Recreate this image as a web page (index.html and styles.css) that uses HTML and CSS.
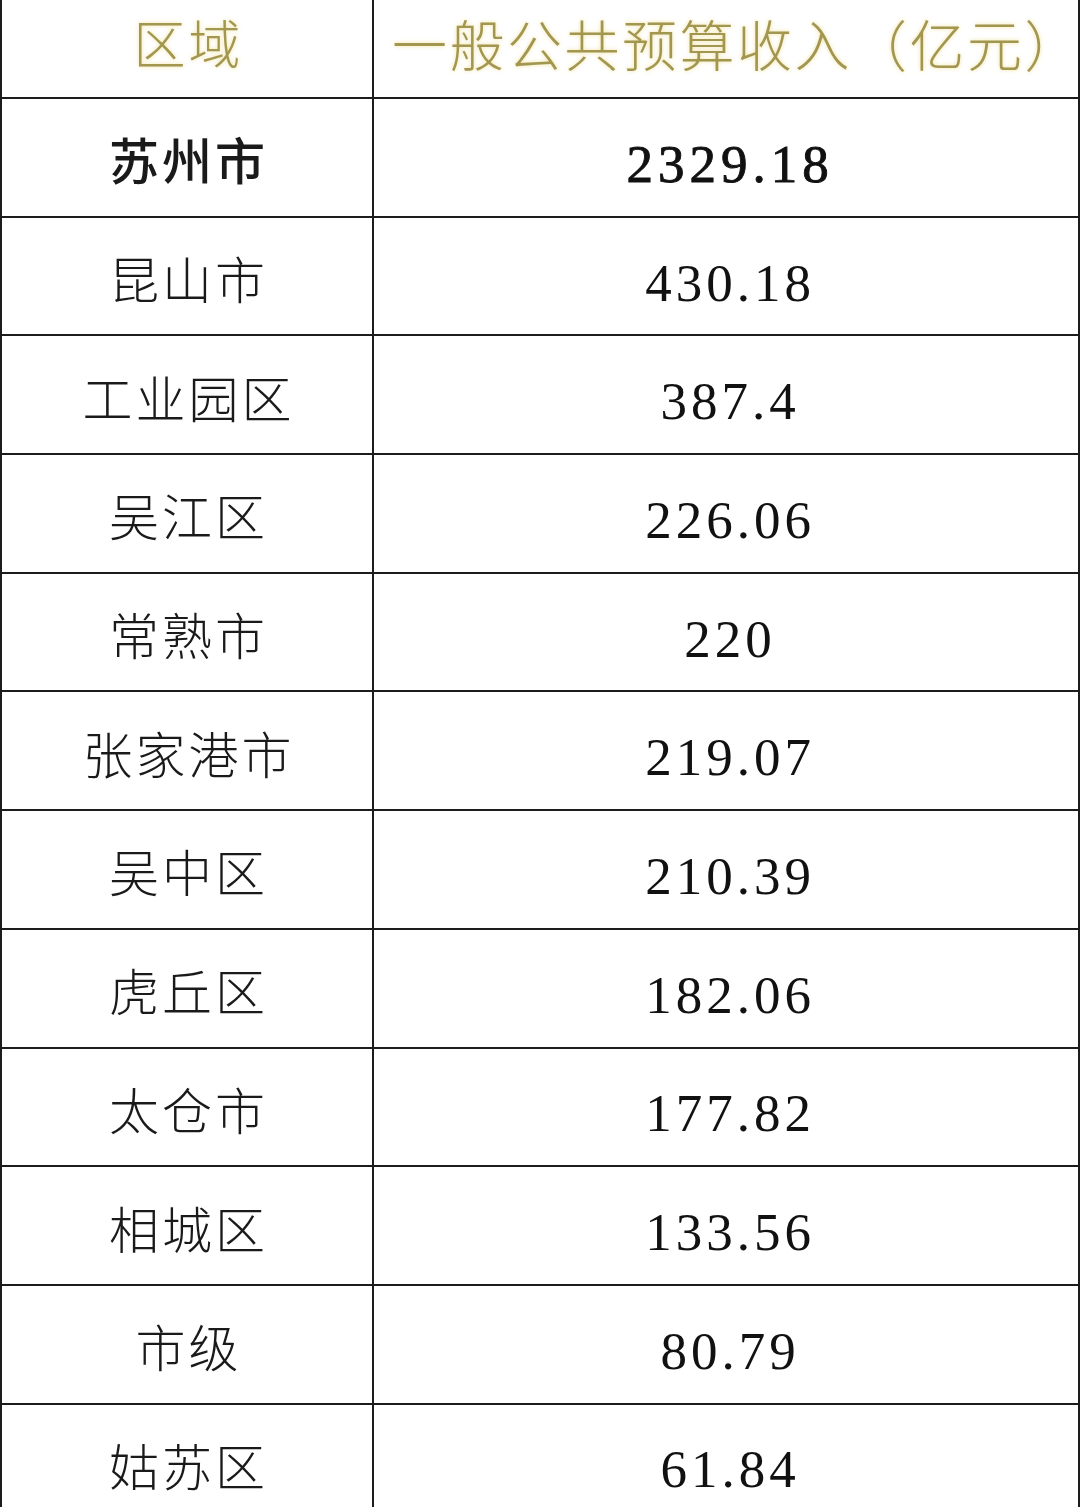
FILE: index.html
```html
<!DOCTYPE html>
<html lang="zh-CN">
<head>
<meta charset="utf-8">
<title>苏州一般公共预算收入</title>
<link rel="stylesheet" href="styles.css">
</head>
<body>
<div class="table">
  <div class="cell head name">区域</div>
  <div class="cell head value">一般公共预算收入（亿元）</div>

  <div class="cell name bold">苏州市</div>
  <div class="cell value bold">2329.18</div>

  <div class="cell name">昆山市</div>
  <div class="cell value">430.18</div>

  <div class="cell name">工业园区</div>
  <div class="cell value">387.4</div>

  <div class="cell name">吴江区</div>
  <div class="cell value">226.06</div>

  <div class="cell name">常熟市</div>
  <div class="cell value">220</div>

  <div class="cell name">张家港市</div>
  <div class="cell value">219.07</div>

  <div class="cell name">吴中区</div>
  <div class="cell value">210.39</div>

  <div class="cell name">虎丘区</div>
  <div class="cell value">182.06</div>

  <div class="cell name">太仓市</div>
  <div class="cell value">177.82</div>

  <div class="cell name">相城区</div>
  <div class="cell value">133.56</div>

  <div class="cell name">市级</div>
  <div class="cell value">80.79</div>

  <div class="cell name">姑苏区</div>
  <div class="cell value">61.84</div>
</div>
</body>
</html>
```
FILE: styles.css
```css
html, body {
  margin: 0;
  padding: 0;
  background: #ffffff;
}

body {
  width: 1080px;
  height: 1507px;
  overflow: hidden;
}

.table {
  display: grid;
  grid-template-columns: 372px 1fr;
  grid-template-rows: 99px;
  grid-auto-rows: 118.7px;
  width: 1080px;
  box-sizing: border-box;
  border-left: 2px solid #1c1c1c;
  border-right: 2px solid #1c1c1c;
}

.cell {
  display: flex;
  align-items: center;
  justify-content: center;
  box-sizing: border-box;
  border-bottom: 2px solid #1c1c1c;
  color: #1a1a1a;
  white-space: nowrap;
}

.name {
  border-right: 2px solid #1c1c1c;
  font-family: "Noto Sans CJK SC", "Noto Sans CJK JP", sans-serif;
  font-weight: 300;
  font-size: 50px;
  letter-spacing: 3px;
  padding-top: 2px;
  padding-left: 3px;
}

.value {
  font-family: "Liberation Serif", "Times New Roman", serif;
  font-size: 53px;
  letter-spacing: 4px;
  padding-top: 13px;
  padding-left: 4px;
  color: #111111;
}

.name.bold {
  font-weight: 500;
}

.value.bold {
  -webkit-text-stroke: 0.9px #111111;
  letter-spacing: 5px;
}

.head {
  font-family: "Noto Sans CJK SC", "Noto Sans CJK JP", sans-serif;
  font-weight: 300;
  color: #a3964f;
  text-shadow: 0 0 4px rgba(235, 220, 140, 0.85);
  padding-top: 0;
  padding-bottom: 14px;
}

.head.name {
  font-size: 52px;
  letter-spacing: 3px;
}

.head.value {
  font-size: 55px;
  letter-spacing: 2.5px;
  padding-left: 18px;
}
```
